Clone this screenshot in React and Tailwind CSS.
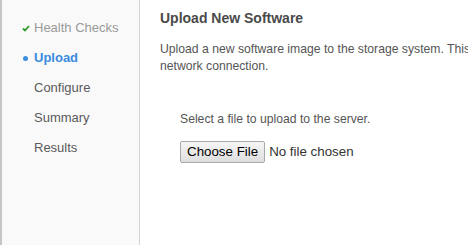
export default function App() {
  const items = [
    { label: "Health Checks", state: "done" },
    { label: "Upload", state: "active" },
    { label: "Configure" },
    { label: "Summary" },
    { label: "Results" },
  ];
  return (
    <div className="w-[468px] h-[245px] overflow-hidden flex bg-white" style={{ fontFamily: '"Liberation Sans", Arial, sans-serif' }}>
      <div className="w-[140px] shrink-0 h-full bg-[#f9f9f9] border-l-2 border-l-[#c6c6c6] border-r border-r-[#d4d4d4] pt-[13px]">
        {items.map((it) => (
          <div key={it.label} className="h-[30px] flex items-center pl-[20px]">
            <span className="w-[12px] flex items-center justify-start">
              {it.state === "done" && (
                <svg width="8" height="7" viewBox="0 0 8 7">
                  <path d="M1 3.5 L3 5.5 L7 1" stroke="#2a9a2a" strokeWidth="1.8" fill="none" />
                </svg>
              )}
              {it.state === "active" && <span className="block w-[5px] h-[5px] rounded-full bg-[#3c8fe0] ml-[1px]" />}
            </span>
            <span
              className={
                "text-[13px] " +
                (it.state === "active"
                  ? "font-bold text-[#3a8be0]"
                  : it.state === "done"
                  ? "text-[#9a9a9a]"
                  : "text-[#5a5a5a]")
              }
            >
              {it.label}
            </span>
          </div>
        ))}
      </div>
      <div className="flex-1 min-w-0 pl-[20px] pt-[10px] text-[#555]">
        <div className="text-[14px] font-bold text-[#4a4a4a] leading-[17px]">Upload New Software</div>
        <div className="mt-[14px] text-[12.2px] leading-[17px] whitespace-nowrap">
          Upload a new software image to the storage system. This
          <br />
          network connection.
        </div>
        <div className="pl-[20px] mt-[36px]">
          <div className="text-[12.2px] leading-[17px] text-[#555]">Select a file to upload to the server.</div>
          <div className="mt-[13px] flex items-center">
            <div className="h-[22px] px-[6px] flex items-center border border-[#a9a9a9] rounded-[2px] bg-gradient-to-b from-[#f6f6f6] to-[#dedede] text-[13.333px] text-black">
              Choose File
            </div>
            <span className="ml-[4px] text-[13.333px] text-[#333]">No file chosen</span>
          </div>
        </div>
      </div>
    </div>
  );
}
